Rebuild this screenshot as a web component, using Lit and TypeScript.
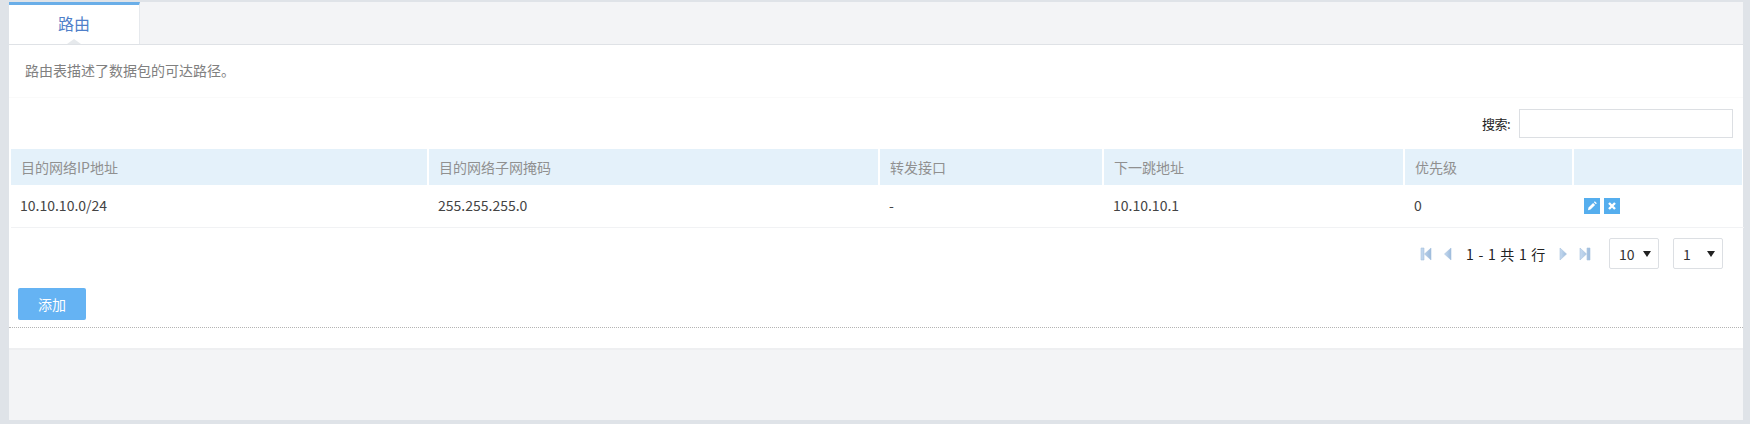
import { LitElement, html, css, svg } from 'lit';
import { customElement } from 'lit/decorators.js';

const COLUMNS = ['目的网络IP地址', '目的网络子网掩码', '转发接口', '下一跳地址', '优先级', ''];
const ROW = ['10.10.10.0/24', '255.255.255.0', '-', '10.10.10.1', '0'];

const pagerIcon = (body: unknown) => html`
  <svg class="pager-icon" width="12" height="14" viewBox="0 0 12 14">
    <defs>
      <linearGradient id="pg" x1="0" y1="0" x2="1" y2="0">
        <stop offset="0" stop-color="#c6daf0"></stop>
        <stop offset="1" stop-color="#9dbbdc"></stop>
      </linearGradient>
    </defs>
    ${body}
  </svg>
`;

const ICON_FIRST = svg`<path d="M1 1h3v12H1z M11 1v12L4.5 7z" fill="url(#pg)" stroke="#a9c2de" stroke-width=".6"/>`;
const ICON_PREV = svg`<path d="M9 1v12L2.5 7z" fill="url(#pg)" stroke="#a9c2de" stroke-width=".6"/>`;
const ICON_NEXT = svg`<path d="M3 1v12l6.5-6z" fill="url(#pg)" stroke="#a9c2de" stroke-width=".6"/>`;
const ICON_LAST = svg`<path d="M8 1h3v12H8z M1 1v12l6.5-6z" fill="url(#pg)" stroke="#a9c2de" stroke-width=".6"/>`;

@customElement('app-root')
export class AppRoot extends LitElement {
  static styles = css`
    :host {
      display: block;
      height: 424px;
      box-sizing: border-box;
      padding: 2px 7px 4px 9px;
      background: #dfe3e8;
      font-family: 'Noto Sans CJK SC', 'Noto Sans', sans-serif;
      font-size: 14px;
      color: #444;
    }

    .page {
      height: 100%;
      background: #f3f4f6;
      display: flex;
      flex-direction: column;
    }

    .tabs {
      height: 43px;
      box-sizing: border-box;
      border-bottom: 1px solid #dfe2e6;
      display: flex;
    }

    .tab {
      position: relative;
      width: 131px;
      height: 42px;
      box-sizing: border-box;
      border-top: 3px solid #6aaee8;
      border-right: 1px solid #e6e9ed;
      background: #fff;
      color: #4f7fc9;
      font-size: 16px;
      line-height: 36px;
      text-align: center;
    }

    .tab::after {
      content: '';
      position: absolute;
      left: 58px;
      bottom: 0;
      width: 14px;
      height: 5px;
      background: #e6e9ec;
      clip-path: polygon(50% 0, 100% 100%, 0 100%);
    }

    .panel {
      height: 305px;
      box-sizing: border-box;
      background: #fff;
      border-bottom: 2px solid #eeeff1;
    }

    .notice {
      height: 53px;
      box-sizing: border-box;
      padding: 0 16px;
      border-bottom: 1px solid #fafafa;
      color: #808080;
      line-height: 51px;
      white-space: nowrap;
    }

    .search {
      height: 51px;
      box-sizing: border-box;
      padding: 11px 10px 0 0;
      display: flex;
      justify-content: flex-end;
      align-items: flex-start;
      gap: 9px;
      color: #222;
      font-size: 13px;
      letter-spacing: -0.5px;
    }

    .search label {
      line-height: 29px;
    }

    .search input {
      width: 214px;
      height: 29px;
      box-sizing: border-box;
      border: 1px solid #dcdfe3;
      background: #fff;
      padding: 0 6px;
      outline: none;
    }

    .grid {
      display: grid;
      grid-template-columns: 416px 449px 222px 299px 167px 168px;
      gap: 0 2px;
      margin-left: 2px;
    }

    .head {
      height: 36px;
      background: #e4f1fa;
      color: #909090;
      line-height: 36px;
      padding-left: 10px;
      white-space: nowrap;
    }

    .cell {
      height: 42px;
      line-height: 41px;
      padding-left: 9px;
      white-space: nowrap;
      border-bottom: 1px solid #f1f2f4;
      margin: 0 -2px 0 0;
      color: #444;
    }

    .actions {
      display: flex;
      align-items: center;
      gap: 4px;
      padding-left: 10px;
    }

    .act {
      width: 16px;
      height: 16px;
      background: #55aeee;
      display: flex;
      align-items: center;
      justify-content: center;
    }

    .pager {
      height: 60px;
      box-sizing: border-box;
      padding: 10px 20px 0 0;
      display: flex;
      justify-content: flex-end;
      align-items: flex-start;
      color: #222;
    }

    .pager-group {
      height: 31px;
      display: flex;
      align-items: center;
    }

    .pager-icon {
      margin-right: 10px;
      flex: none;
    }

    .pager-label {
      width: 82px;
      margin: 0 9px 0 2px;
      white-space: nowrap;
      word-spacing: 1.5px;
    }

    .select {
      width: 50px;
      height: 31px;
      box-sizing: border-box;
      border: 1px solid #dcdfe3;
      border-radius: 2px;
      padding: 0 7px 0 9px;
      display: flex;
      align-items: center;
      justify-content: space-between;
      color: #333;
    }

    .select + .select {
      margin-left: 14px;
    }

    .pager-group + .select {
      margin-left: 8px;
    }

    .footer {
      height: 40px;
      box-sizing: border-box;
      padding-left: 9px;
      border-bottom: 1px dotted #b4b4b4;
    }

    .add {
      display: block;
      width: 68px;
      height: 32px;
      border: none;
      border-radius: 2px;
      background: #65b3f3;
      color: #fff;
      font: inherit;
      padding: 0;
    }
  `;

  render() {
    return html`
      <div class="page">
        <div class="tabs"><div class="tab">路由</div></div>
        <div class="panel">
          <div class="notice">路由表描述了数据包的可达路径。</div>
          <div class="search">
            <label>搜索:</label>
            <input type="text" />
          </div>
          <div class="grid">
            ${COLUMNS.map((c) => html`<div class="head">${c}</div>`)}
            ${ROW.map((c) => html`<div class="cell">${c}</div>`)}
            <div class="cell actions">
              <span class="act">
                <svg width="12" height="12" viewBox="0 0 12 12">
                  <path d="M2 10.2l.5-2.6 4.6-4.6 2 2-4.6 4.6z M7.9 2.2l.9-.9 2 2-.9.9z" fill="#fff"></path>
                </svg>
              </span>
              <span class="act">
                <svg width="10" height="10" viewBox="0 0 10 10">
                  <path d="M2 2l6 6M8 2L2 8" stroke="#fff" stroke-width="2.4"></path>
                </svg>
              </span>
            </div>
          </div>
          <div class="pager">
            <div class="pager-group">
              ${pagerIcon(ICON_FIRST)} ${pagerIcon(ICON_PREV)}
              <span class="pager-label">1 - 1 共 1 行</span>
              ${pagerIcon(ICON_NEXT)} ${pagerIcon(ICON_LAST)}
            </div>
            <div class="select">10 ${this.caret()}</div>
            <div class="select">1 ${this.caret()}</div>
          </div>
          <div class="footer"><button class="add">添加</button></div>
        </div>
      </div>
    `;
  }

  caret() {
    return html`<svg width="8" height="6" viewBox="0 0 8 6"><path d="M0 0h8L4 6z" fill="#222"></path></svg>`;
  }
}
